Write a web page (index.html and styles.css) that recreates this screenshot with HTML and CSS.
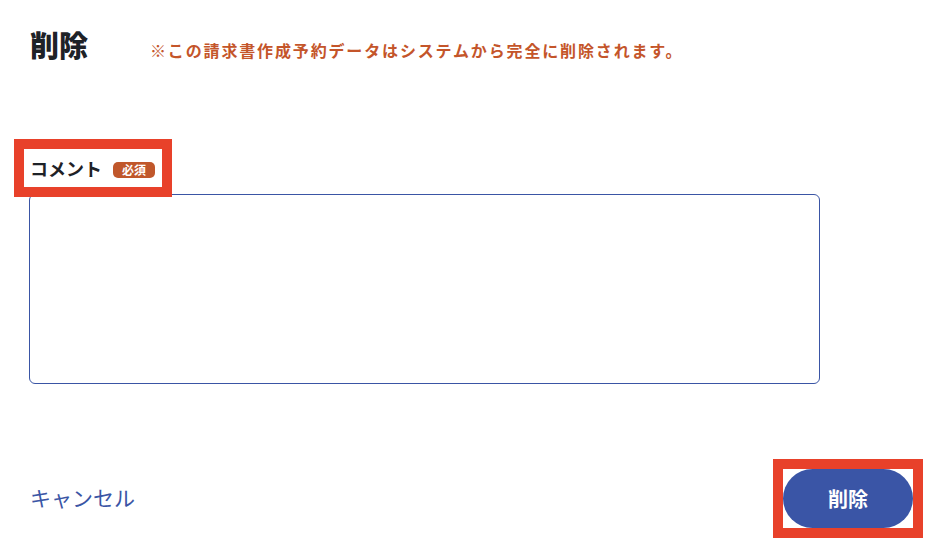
FILE: index.html
```html
<!DOCTYPE html>
<html lang="ja">
<head>
<meta charset="utf-8">
<title>削除</title>
<link rel="stylesheet" href="styles.css">
</head>
<body>
<div class="page">
  <div class="header">
    <h1 class="title">削除</h1>
    <p class="note">※この請求書作成予約データはシステムから完全に削除されます。</p>
  </div>
  <div class="field-label">
    <span class="label-text">コメント</span>
    <span class="badge">必須</span>
    <span class="mark"></span>
  </div>
  <textarea class="comment"></textarea>
  <div class="footer">
    <a class="cancel" href="#">キャンセル</a>
    <button class="delete" type="button">削除<span class="mark mark-btn"></span></button>
  </div>
</div>
</body>
</html>
```

FILE: styles.css
```css
* { box-sizing: border-box; }
html, body { margin: 0; padding: 0; background: #ffffff; }
body {
  font-family: "Noto Sans CJK JP", "Noto Sans", sans-serif;
  color: #1f2328;
}
.page {
  width: 946px;
  height: 560px;
  padding: 24px 33px 0 30px;
  overflow: hidden;
}
.header {
  display: flex;
  align-items: baseline;
  height: 40px;
}
.title {
  margin: 0;
  font-size: 29px;
  line-height: 40px;
  font-weight: 900;
  color: #1e2227;
}
.note {
  margin: 0 0 0 62px;
  font-size: 16px;
  line-height: 24px;
  letter-spacing: 1.85px;
  color: #c4552a;
  font-weight: 700;
}
.field-label {
  position: relative;
  display: flex;
  align-items: center;
  margin-top: 92px;
  height: 24px;
  width: 128px;
}
.label-text {
  font-size: 18px;
  line-height: 24px;
  font-weight: 700;
  color: #1e2227;
}
.badge {
  margin-left: 11px;
  margin-top: 3px;
  width: 42px;
  height: 16px;
  border-radius: 5px;
  background: #c0572b;
  color: #ffffff;
  font-size: 12px;
  line-height: 16px;
  font-weight: 700;
  text-align: center;
}
.mark {
  position: absolute;
  border: 10px solid #e8412a;
  pointer-events: none;
}
.field-label .mark {
  left: -16px;
  top: -17px;
  width: 158px;
  height: 58px;
}
.comment {
  display: block;
  margin: 14px 0 0 -1px;
  width: 791px;
  height: 190px;
  border: 1px solid #3a55a5;
  border-radius: 6px;
  resize: none;
  font: inherit;
  background: #fff;
}
.footer {
  display: flex;
  justify-content: space-between;
  align-items: center;
  margin-top: 85px;
}
.cancel {
  font-size: 21px;
  line-height: 28px;
  color: #3a55a5;
  text-decoration: none;
  margin-top: -4px;
}
.delete {
  position: relative;
  width: 130px;
  height: 59px;
  border: none;
  border-radius: 30px;
  background: #3a55a6;
  color: #ffffff;
  font-family: inherit;
  font-size: 20px;
  font-weight: 700;
  padding: 0;
}
.mark-btn {
  left: -10px;
  top: -10px;
  width: 150px;
  height: 79px;
}
```
